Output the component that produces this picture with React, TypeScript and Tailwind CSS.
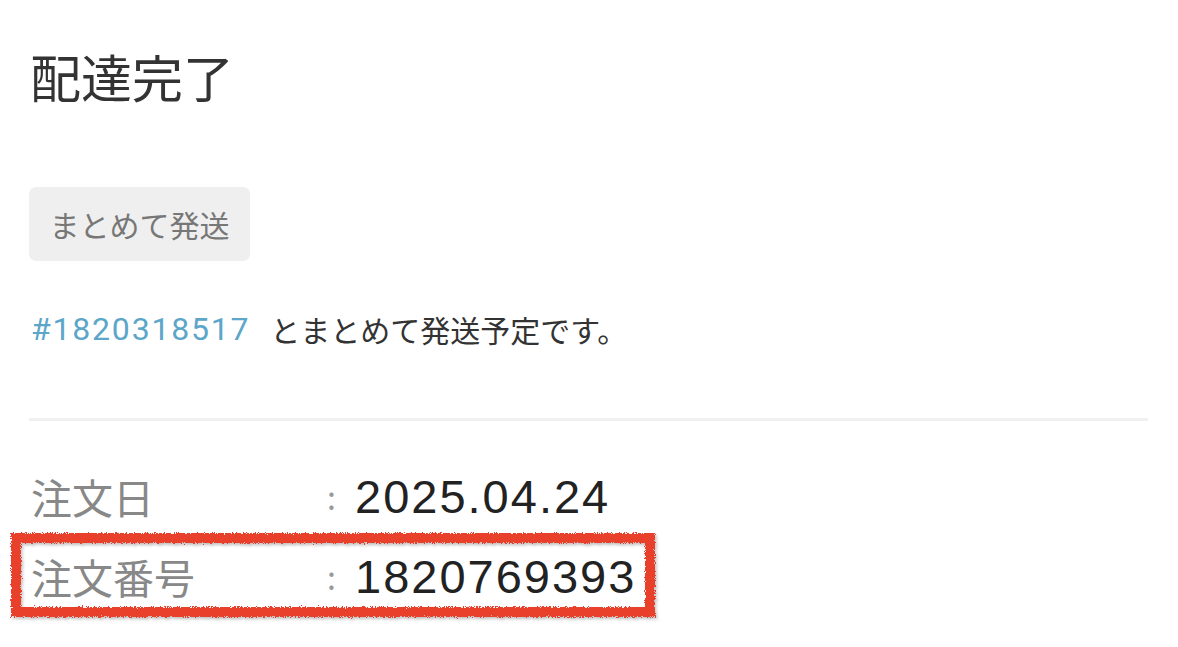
import React from 'react';

const jp = 'font-["Noto_Sans_CJK_JP",sans-serif]';
const num = 'font-["Liberation_Sans","Noto_Sans_CJK_JP",sans-serif]';

// hand-drawn style marker frame around a highlighted row
const MarkerFrame: React.FC = () => (
  <svg className="pointer-events-none absolute -left-[21px] -top-[12px]" width="660" height="100" viewBox="0 0 660 100">
    <defs>
      <filter id="rough" x="-5%" y="-20%" width="110%" height="140%">
        <feTurbulence type="fractalNoise" baseFrequency="0.9" numOctaves="2" seed="3" result="noise" />
        <feDisplacementMap in="SourceGraphic" in2="noise" scale="5" xChannelSelector="R" yChannelSelector="G" result="rough" />
        <feDropShadow dx="1.5" dy="2" stdDeviation="1.5" floodColor="#000" floodOpacity="0.25" />
      </filter>
    </defs>
    <rect x="6" y="6" width="634" height="74" fill="none" stroke="#e8412b" strokeWidth="10" filter="url(#rough)" />
  </svg>
);

const InfoRow: React.FC<{ label: string; value: string; children?: React.ReactNode }> = ({ label, value, children }) => (
  <div className="relative flex h-[64px] items-center">
    {children}
    <span className={`${jp} w-[296px] text-[41px] leading-none text-[#888]`}>{label}</span>
    <span className={`${jp} w-[28px] text-[32px] leading-none text-[#999]`}>:</span>
    <span className={`${num} text-[47px] leading-none tracking-[2px] text-[#222]`}>{value}</span>
  </div>
);

export default function App() {
  return (
    <div className="min-h-screen w-[1178px] bg-white pl-[29px] pr-[30px] pt-[44px]">
      <h1 className={`${jp} pl-[1px] text-[51px] font-normal leading-[64px] text-[#333]`}>配達完了</h1>

      <button className={`${jp} mt-[79px] h-[74px] w-[221px] rounded-[7px] bg-[#efefef] text-[30px] text-[#777]`}>
        まとめて発送
      </button>

      <p className="mt-[52px] flex items-center pl-[2px]">
        <span className='font-["Roboto",sans-serif] text-[32px] leading-none tracking-[1.8px] text-[#5ba6c9]'>#1820318517</span>
        <span className={`${jp} ml-[20px] text-[30px] leading-none text-[#333]`}>とまとめて発送予定です。</span>
      </p>

      <div className="mt-[73px] h-[3px] w-[1119px] bg-[#f0f0f0]" />

      <div className="mt-[43px] pl-[2px]">
        <InfoRow label="注文日" value="2025.04.24" />
        <div className="mt-[16px]">
          <InfoRow label="注文番号" value="1820769393">
            <MarkerFrame />
          </InfoRow>
        </div>
      </div>
    </div>
  );
}
